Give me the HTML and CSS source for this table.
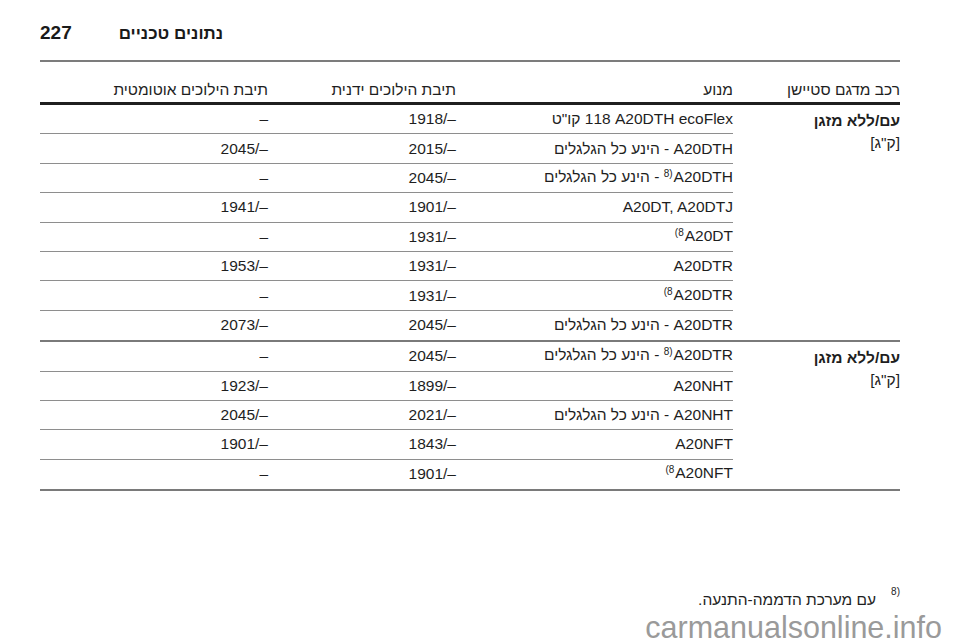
FILE: index.html
```html
<!DOCTYPE html>
<html lang="he">
<head>
<meta charset="utf-8">
<title>נתונים טכניים 227</title>
<link rel="stylesheet" href="styles.css">
</head>
<body>
<div class="page">
  <header class="top">
    <span class="pg">227</span>
    <span class="title he">נתונים טכניים</span>
  </header>

  <div class="table" dir="rtl">
    <div class="thead">
      <div class="c1">רכב מדגם סטיישן</div>
      <div class="c2">מנוע</div>
      <div class="c3">תיבת הילוכים ידנית</div>
      <div class="c4">תיבת הילוכים אוטומטית</div>
    </div>

    <div class="group">
      <div class="c1 label">
        <div class="b">עם/ללא מזגן</div>
        <div>[ק"ג]</div>
      </div>
      <div class="rows">
        <div class="row"><div class="c2"><span class="he">קו"ט</span> 118 A20DTH ecoFlex</div><div class="c3">1918/–</div><div class="c4">–</div></div>
        <div class="row"><div class="c2"><span class="he">הינע כל הגלגלים</span> - A20DTH</div><div class="c3">2015/–</div><div class="c4">2045/–</div></div>
        <div class="row"><div class="c2"><span class="he">הינע כל הגלגלים</span> - <span class="fn">8)</span>A20DTH</div><div class="c3">2045/–</div><div class="c4">–</div></div>
        <div class="row"><div class="c2">A20DT, A20DTJ</div><div class="c3">1901/–</div><div class="c4">1941/–</div></div>
        <div class="row"><div class="c2"><span class="fn">(8</span>A20DT</div><div class="c3">1931/–</div><div class="c4">–</div></div>
        <div class="row"><div class="c2">A20DTR</div><div class="c3">1931/–</div><div class="c4">1953/–</div></div>
        <div class="row"><div class="c2"><span class="fn">(8</span>A20DTR</div><div class="c3">1931/–</div><div class="c4">–</div></div>
        <div class="row"><div class="c2"><span class="he">הינע כל הגלגלים</span> - A20DTR</div><div class="c3">2045/–</div><div class="c4">2073/–</div></div>
      </div>
    </div>

    <div class="group">
      <div class="c1 label">
        <div class="b">עם/ללא מזגן</div>
        <div>[ק"ג]</div>
      </div>
      <div class="rows">
        <div class="row"><div class="c2"><span class="he">הינע כל הגלגלים</span> - <span class="fn">8)</span>A20DTR</div><div class="c3">2045/–</div><div class="c4">–</div></div>
        <div class="row"><div class="c2">A20NHT</div><div class="c3">1899/–</div><div class="c4">1923/–</div></div>
        <div class="row"><div class="c2"><span class="he">הינע כל הגלגלים</span> - A20NHT</div><div class="c3">2021/–</div><div class="c4">2045/–</div></div>
        <div class="row"><div class="c2">A20NFT</div><div class="c3">1843/–</div><div class="c4">1901/–</div></div>
        <div class="row"><div class="c2"><span class="fn">(8</span>A20NFT</div><div class="c3">1901/–</div><div class="c4">–</div></div>
      </div>
    </div>
  </div>

  <div class="footnote" dir="rtl">
    <span class="mark" dir="ltr">8)</span>
    <span class="ftext">עם מערכת הדממה-התנעה.</span>
  </div>

  <div class="wm">carmanualsonline.info</div>
</div>
</body>
</html>
```

FILE: styles.css
```css
* { box-sizing: border-box; }

html, body {
  margin: 0;
  padding: 0;
  background: #ffffff;
}

body {
  font-family: "Liberation Sans", Arial, "DejaVu Sans", sans-serif;
  color: #1e1e1e;
  font-size: 15.5px;
  width: 960px;
  height: 642px;
  overflow: hidden;
}

.page {
  padding: 0 60px 0 40px;
}

.he {
  direction: rtl;
  unicode-bidi: isolate;
}

/* page header */
.top {
  display: flex;
  align-items: baseline;
  gap: 47px;
  height: 62px;
  padding-top: 22px;
  border-bottom: 2px solid #7c7c7c;
  font-weight: bold;
  font-size: 19px;
  line-height: 22px;
  color: #1a1a1a;
}

.title {
  font-size: 17px;
}

/* table */
.table {
  width: 860px;
}

.c1 { width: 167px; flex: none; }
.c2 { width: 277px; flex: none; }
.c3 { width: 188px; flex: none; }
.c4 { width: 228px; flex: none; }

.thead {
  display: flex;
  height: 43px;
  padding-top: 19px;
  line-height: 18px;
  border-bottom: 3px solid #1f1f1f;
}

.group {
  display: flex;
  border-bottom: 2px solid #7a7a7a;
}

.label {
  padding-top: 5px;
  line-height: 22px;
}

.label .b {
  font-weight: bold;
}

.rows {
  display: flex;
  flex-direction: column;
  width: 693px;
}

.row {
  display: flex;
  height: 29.4px;
  align-items: center;
  border-bottom: 1.5px solid #8e8e8e;
}

.row:last-child {
  border-bottom: none;
}

.row > div {
  direction: ltr;
  text-align: right;
  line-height: 18px;
  white-space: nowrap;
}

.fn {
  font-size: 10px;
  position: relative;
  top: -5px;
  margin-right: 1px;
}

/* footnote */
.footnote {
  display: flex;
  align-items: flex-start;
  gap: 15px;
  margin-top: 100px;
  line-height: 18px;
}

.mark {
  font-size: 10px;
  line-height: 10px;
  margin-top: -4px;
}

.wm {
  text-align: right;
  margin-right: -42px;
  margin-top: 5px;
  font-size: 30.5px;
  line-height: 27px;
  color: #9a9a9a;
}
```
